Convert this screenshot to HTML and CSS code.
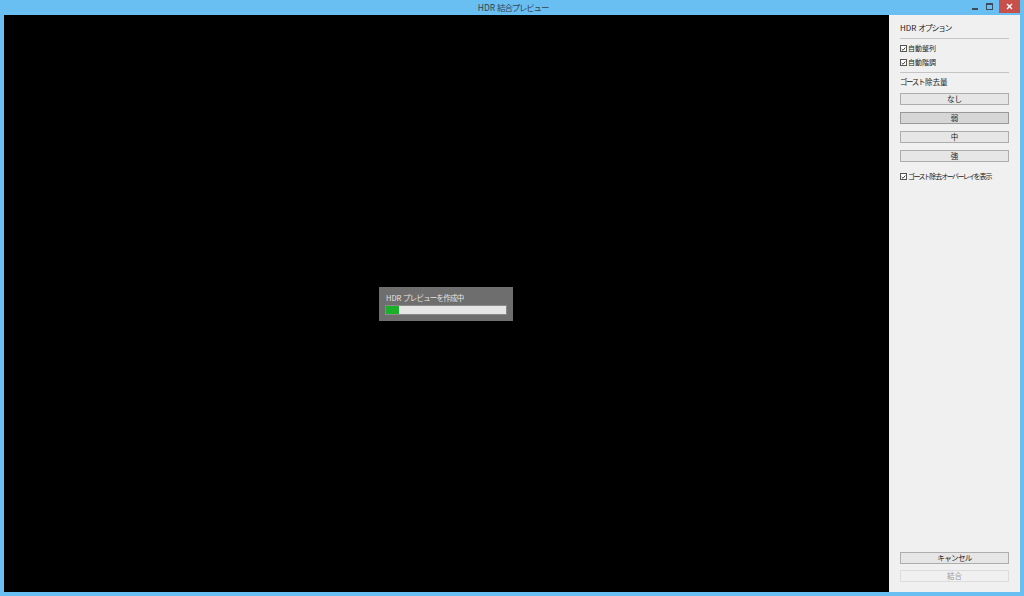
FILE: index.html
```html
<!DOCTYPE html>
<html lang="ja">
<head>
<meta charset="utf-8">
<title>HDR 結合プレビュー</title>
<link rel="stylesheet" href="styles.css">
</head>
<body>
<div class="window">
  <div class="titlebar">
    <div class="title">HDR <span class="jp">結合プレビュー</span></div>
    <div class="controls">
      <div class="ctl min"><span class="min-bar"></span></div>
      <div class="ctl max"><span class="max-box"></span></div>
      <div class="ctl close">
        <svg width="7" height="7" viewBox="0 0 7 7"><path d="M1 1L6 6M6 1L1 6" stroke="#fff" stroke-width="1.4"/></svg>
      </div>
    </div>
  </div>
  <div class="client">
    <div class="canvas">
      <div class="progress-dialog">
        <div class="progress-label">HDR <span class="jp">プレビューを作成中</span></div>
        <div class="progress-track"><div class="progress-fill" style="width:13px"></div></div>
      </div>
    </div>
    <div class="sidebar">
      <div class="section-title">HDR <span class="kana">オプション</span></div>
      <div class="rule"></div>
      <label class="check"><span class="box"><svg width="7" height="7" viewBox="0 0 7 7"><path d="M1 3.5L2.8 5.3L6 1.5" fill="none" stroke="#222" stroke-width="1.2"/></svg></span>自動整列</label>
      <label class="check"><span class="box"><svg width="7" height="7" viewBox="0 0 7 7"><path d="M1 3.5L2.8 5.3L6 1.5" fill="none" stroke="#222" stroke-width="1.2"/></svg></span>自動階調</label>
      <div class="rule rule2"></div>
      <div class="section-title small"><span class="kana">ゴースト</span>除去量</div>
      <div class="buttons">
        <div class="btn">なし</div>
        <div class="btn pressed">弱</div>
        <div class="btn">中</div>
        <div class="btn">強</div>
      </div>
      <label class="check overlay"><span class="box"><svg width="7" height="7" viewBox="0 0 7 7"><path d="M1 3.5L2.8 5.3L6 1.5" fill="none" stroke="#222" stroke-width="1.2"/></svg></span><span class="kana">ゴースト</span>除去<span class="kana">オーバーレイ</span>を表示</label>
      <div class="spacer"></div>
      <div class="btn"><span class="kana">キャンセル</span></div>
      <div class="btn disabled">結合</div>
    </div>
  </div>
</div>
</body>
</html>
```
FILE: styles.css
```css
html, body {
  margin: 0;
  padding: 0;
}
body {
  width: 1024px;
  height: 596px;
  background: #6abff2;
  font-family: "Noto Sans CJK JP", "Noto Sans", sans-serif;
  overflow: hidden;
}
.window {
  display: flex;
  flex-direction: column;
  width: 1024px;
  height: 596px;
  box-sizing: border-box;
  padding: 0 4px 4px 4px;
}
.titlebar {
  height: 15px;
  flex: none;
  position: relative;
  display: flex;
  align-items: center;
  justify-content: center;
}
.title {
  font-size: 8.5px;
  color: #34414f;
  line-height: 15px;
  white-space: nowrap;
  margin-left: 2px;
}
.title .jp {
  letter-spacing: -1.2px;
}
.controls {
  position: absolute;
  right: 0;
  top: 0;
  display: flex;
  align-items: flex-start;
}
.ctl {
  height: 13px;
  display: flex;
  align-items: center;
  justify-content: center;
}
.min { width: 14px; }
.min-bar {
  width: 6px;
  height: 2px;
  background: #3b4b5c;
  margin-top: 4px;
}
.max { width: 14px; margin-right: 3px; }
.max-box {
  width: 5px;
  height: 4px;
  border: 1px solid #3b4b5c;
  border-top-width: 2px;
}
.close {
  width: 21px;
  background: #c7504a;
}
.client {
  flex: 1;
  display: flex;
  min-height: 0;
}
.canvas {
  flex: none;
  width: 885px;
  background: #000;
  display: flex;
  align-items: center;
  justify-content: center;
}
.progress-dialog {
  width: 134px;
  height: 34px;
  box-sizing: border-box;
  background: #6e6e6e;
  padding: 6px 6px 0 6px;
  margin-left: -1px;
}
.progress-label {
  font-size: 7.5px;
  line-height: 10px;
  color: #e4e4e4;
  margin-bottom: 2px;
  margin-left: 1px;
  white-space: nowrap;
}
.progress-label .jp {
  letter-spacing: -0.8px;
}
.progress-track {
  height: 10px;
  background: #e6e6e6;
  border: 1px solid #8a8a8a;
  box-sizing: border-box;
  width: 122px;
}
.progress-fill {
  height: 100%;
  background: #1aae2a;
}
.sidebar {
  flex: 1;
  background: #f0f0f0;
  display: flex;
  flex-direction: column;
  padding: 8px 11px 10px 11px;
  box-sizing: border-box;
}
.kana {
  letter-spacing: -1.4px;
}
.section-title {
  font-size: 8px;
  line-height: 10px;
  color: #222;
  margin-bottom: 5px;
  white-space: nowrap;
}
.section-title.small {
  font-size: 7.5px;
  margin-bottom: 6px;
}
.section-title.small .kana {
  margin-right: 1px;
}
.rule {
  height: 1px;
  background: #c4c4c4;
  margin-bottom: 5px;
}
.rule2 {
  margin-top: 0;
  margin-bottom: 4px;
}
.check {
  display: flex;
  align-items: center;
  font-size: 7px;
  line-height: 9px;
  color: #222;
  height: 9px;
  margin-bottom: 5px;
  gap: 1px;
  white-space: nowrap;
}
.check.overlay {
  gap: 0;
  letter-spacing: -1px;
}
.check.overlay .kana {
  letter-spacing: -1.6px;
}
.check.overlay .box {
  margin-right: 1px;
}
.box {
  width: 7px;
  height: 7px;
  flex: none;
  box-sizing: border-box;
  border: 1px solid #555;
  background: #fff;
  display: flex;
  align-items: center;
  justify-content: center;
}
.box svg {
  display: block;
  width: 6px;
  height: 6px;
}
.buttons {
  display: flex;
  flex-direction: column;
  gap: 7px;
  margin-bottom: 10px;
}
.btn {
  height: 12px;
  box-sizing: border-box;
  border: 1px solid #adadad;
  background: #e6e6e6;
  font-size: 7.5px;
  line-height: 10px;
  text-align: center;
  color: #222;
  white-space: nowrap;
}
.btn .kana {
  letter-spacing: -0.6px;
}
.btn.pressed {
  background: #d6d6d6;
  border-color: #9a9a9a;
}
.btn.disabled {
  background: #f0f0f0;
  border-color: #dcdcdc;
  color: #9a9a9a;
  margin-top: 6px;
}
.spacer { flex: 1; }
```
